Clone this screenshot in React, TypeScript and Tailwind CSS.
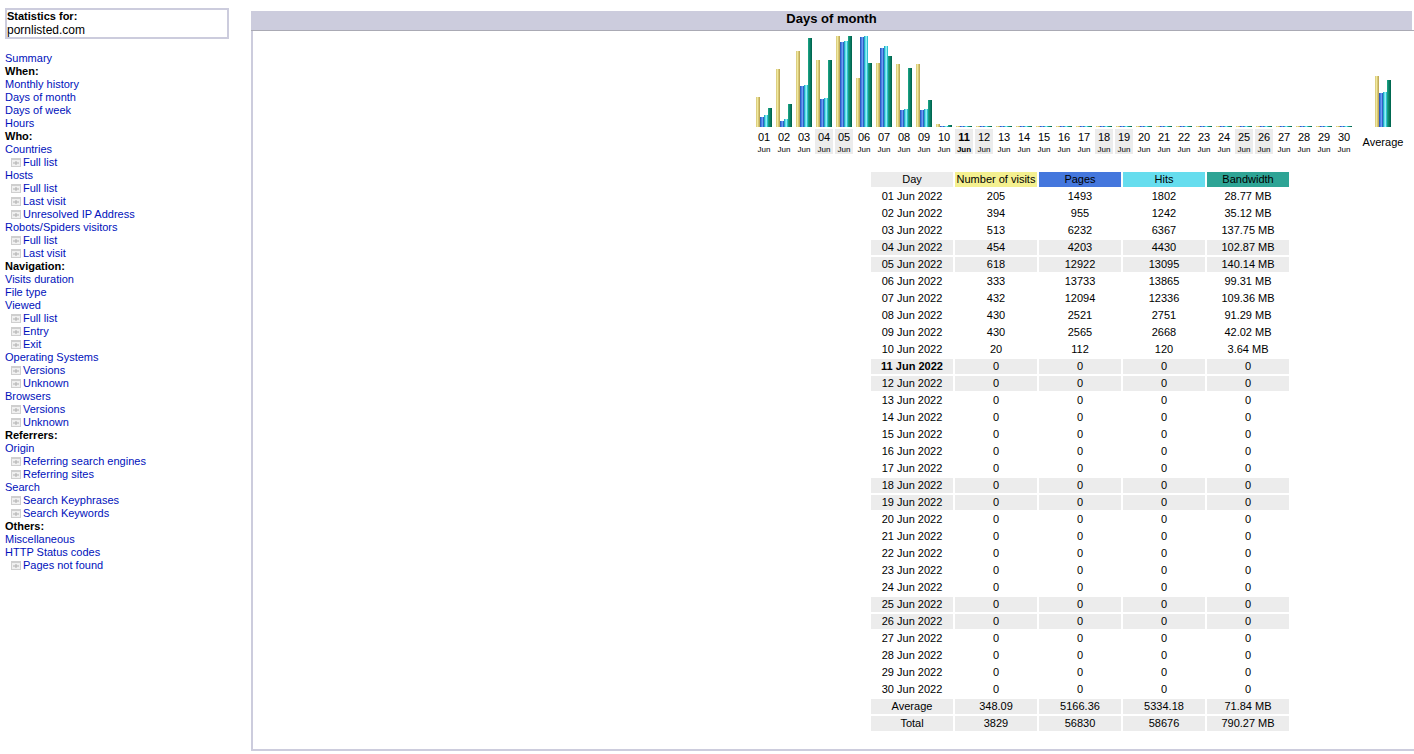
const font = "font-['Liberation_Sans',Arial,sans-serif]";

type NavItem = { t: string; kind?: "head" | "sub" };
const nav: NavItem[] = [
  { t: "Summary" },
  { t: "When:", kind: "head" },
  { t: "Monthly history" },
  { t: "Days of month" },
  { t: "Days of week" },
  { t: "Hours" },
  { t: "Who:", kind: "head" },
  { t: "Countries" },
  { t: "Full list", kind: "sub" },
  { t: "Hosts" },
  { t: "Full list", kind: "sub" },
  { t: "Last visit", kind: "sub" },
  { t: "Unresolved IP Address", kind: "sub" },
  { t: "Robots/Spiders visitors" },
  { t: "Full list", kind: "sub" },
  { t: "Last visit", kind: "sub" },
  { t: "Navigation:", kind: "head" },
  { t: "Visits duration" },
  { t: "File type" },
  { t: "Viewed" },
  { t: "Full list", kind: "sub" },
  { t: "Entry", kind: "sub" },
  { t: "Exit", kind: "sub" },
  { t: "Operating Systems" },
  { t: "Versions", kind: "sub" },
  { t: "Unknown", kind: "sub" },
  { t: "Browsers" },
  { t: "Versions", kind: "sub" },
  { t: "Unknown", kind: "sub" },
  { t: "Referrers:", kind: "head" },
  { t: "Origin" },
  { t: "Referring search engines", kind: "sub" },
  { t: "Referring sites", kind: "sub" },
  { t: "Search" },
  { t: "Search Keyphrases", kind: "sub" },
  { t: "Search Keywords", kind: "sub" },
  { t: "Others:", kind: "head" },
  { t: "Miscellaneous" },
  { t: "HTTP Status codes" },
  { t: "Pages not found", kind: "sub" },
];

const active: [number, number, number, number, string][] = [
  [205, 1493, 1802, 28.77, "28.77 MB"],
  [394, 955, 1242, 35.12, "35.12 MB"],
  [513, 6232, 6367, 137.75, "137.75 MB"],
  [454, 4203, 4430, 102.87, "102.87 MB"],
  [618, 12922, 13095, 140.14, "140.14 MB"],
  [333, 13733, 13865, 99.31, "99.31 MB"],
  [432, 12094, 12336, 109.36, "109.36 MB"],
  [430, 2521, 2751, 91.29, "91.29 MB"],
  [430, 2565, 2668, 42.02, "42.02 MB"],
  [20, 112, 120, 3.64, "3.64 MB"],
];

const days = Array.from({ length: 30 }, (_, i) => {
  const d = i < 10 ? active[i] : ([0, 0, 0, 0, "0"] as [number, number, number, number, string]);
  const dd = String(i + 1).padStart(2, "0");
  const dayNo = i + 1;
  const weekend = (dayNo - 4) % 7 === 0 || (dayNo - 5) % 7 === 0;
  return { dd, visits: d[0], pages: d[1], hits: d[2], bw: d[3], bwText: d[4], weekend, today: dayNo === 11 };
});

const px = (v: number, max: number) => Math.max(1, Math.round((v / max) * 91));

function Bars({ v, p, h, b }: { v: number; p: number; h: number; b: number }) {
  return (
    <div className="flex items-end justify-center h-[91px]">
      <div className="w-1 bg-[linear-gradient(90deg,#ddcf82_25%,#f0e99c_25%,#f0e99c_50%,#d8c776_50%,#d8c776_75%,#c0ac5c_75%)]" style={{ height: px(v, 618) }} />
      <div className="w-1 bg-[linear-gradient(90deg,#2f5cc0_25%,#4a80e8_25%,#4a80e8_50%,#6f9cf0_50%,#6f9cf0_75%,#3060c8_75%)]" style={{ height: px(p, 13865) }} />
      <div className="w-1 bg-[linear-gradient(90deg,#20b0c0_25%,#66ddee_25%,#66ddee_50%,#90f0f8_50%,#90f0f8_75%,#30c0d0_75%)]" style={{ height: px(h, 13865) }} />
      <div className="w-1 bg-[linear-gradient(90deg,#18a080_25%,#108870_25%,#108870_50%,#087860_50%,#087860_75%,#006850_75%)]" style={{ height: px(b, 140.14) }} />
    </div>
  );
}

function DayIcon() {
  return (
    <svg width="10" height="9" viewBox="0 0 10 9" className="inline-block mr-0.5 align-[-1px]">
      <rect x="0" y="0" width="10" height="9" fill="#cfcfcf" />
      <rect x="1" y="2" width="8" height="6" fill="#f0f0f0" />
      <path d="M2 5h6M5 3v4" stroke="#b0b0b0" strokeWidth="1" fill="none" />
    </svg>
  );
}

const cell = "h-[15px] w-[82px] p-0 text-center align-middle leading-[15px]";

function Row({ cols, shaded, bold }: { cols: (string | number)[]; shaded?: boolean; bold?: boolean }) {
  return (
    <tr>
      {cols.map((c, i) => (
        <td key={i} className={`${cell} ${shaded ? "bg-[#ececec]" : ""} ${bold && i === 0 ? "font-bold" : ""}`}>
          {c}
        </td>
      ))}
    </tr>
  );
}

export default function App() {
  return (
    <div className={`${font} text-[11px] text-black bg-white h-[754px] w-[1414px] overflow-hidden flex`}>
      <aside className="w-[251px] shrink-0 pl-[5px] pt-2">
        <div className="w-[224px] h-[31px] border-2 border-[#ccccdd] leading-[13px]">
          <div className="font-bold">Statistics for:</div>
          <div className="text-[12px] leading-[15px]">pornlisted.com</div>
        </div>
        <nav className="mt-[13px] leading-[13px]">
          {nav.map((n, i) =>
            n.kind === "head" ? (
              <div key={i} className="font-bold h-[13px]">{n.t}</div>
            ) : (
              <div key={i} className={`h-[13px] whitespace-nowrap ${n.kind === "sub" ? "pl-1.5" : ""}`}>
                {n.kind === "sub" && <DayIcon />}
                <a className="text-[#0011bb]">{n.t}</a>
              </div>
            )
          )}
        </nav>
      </aside>

      <main className="flex-1 min-w-0 pt-[11px]">
        <div className="w-[1161px] h-[19px] bg-[#ccccdd] text-center font-bold text-[13px] leading-[15px]">
          Days of month
        </div>
        <div className="w-[1656px] h-[721px] border-2 border-r-0 border-t-0 border-[#ccccdd]">
          <div className="h-px bg-[#aaaab4] -ml-0.5" />
          <div className="flex flex-col items-center">
            <div className="w-[658px] ml-1.5 pt-[5px]">
              <div className="flex">
                {days.map((d) => (
                  <div key={d.dd} className="w-5 shrink-0">
                    <Bars v={d.visits} p={d.pages} h={d.hits} b={d.bw} />
                  </div>
                ))}
                <div className="w-[58px] shrink-0">
                  <Bars v={348.09} p={5166.36} h={5334.18} b={71.84} />
                </div>
              </div>
              <div className="flex mt-0.5">
                <div className="flex">
                  {days.map((d) => (
                    <div key={d.dd} className="w-5 shrink-0 px-px">
                      <div
                        className={`h-[25px] text-center ${d.weekend || d.today || d.dd === "12" ? "bg-[#ececec]" : ""} ${d.today ? "font-bold" : ""}`}
                      >
                        <div className="leading-[15px] pt-px">{d.dd}</div>
                        <div className="text-[8px] leading-[9px] whitespace-nowrap">Jun</div>
                      </div>
                    </div>
                  ))}
                </div>
                <div className="w-[58px] text-center pt-[5px]">Average</div>
              </div>
            </div>
            <table className="border-separate border-spacing-0.5 mt-4">
              <tbody>
                <tr>
                  <td className={`${cell} bg-[#ececec]`}>Day</td>
                  <td className={`${cell} bg-[#f4f090]`}>Number of visits</td>
                  <td className={`${cell} bg-[#4477dd]`}>Pages</td>
                  <td className={`${cell} bg-[#66ddee]`}>Hits</td>
                  <td className={`${cell} bg-[#2ea495]`}>Bandwidth</td>
                </tr>
                {days.map((d) => (
                  <Row
                    key={d.dd}
                    cols={[`${d.dd} Jun 2022`, d.visits, d.pages, d.hits, d.bwText]}
                    shaded={d.weekend || d.today || d.dd === "12"}
                    bold={d.today}
                  />
                ))}
                <Row cols={["Average", "348.09", "5166.36", "5334.18", "71.84 MB"]} shaded />
                <Row cols={["Total", "3829", "56830", "58676", "790.27 MB"]} shaded />
              </tbody>
            </table>
          </div>
        </div>
      </main>
    </div>
  );
}
